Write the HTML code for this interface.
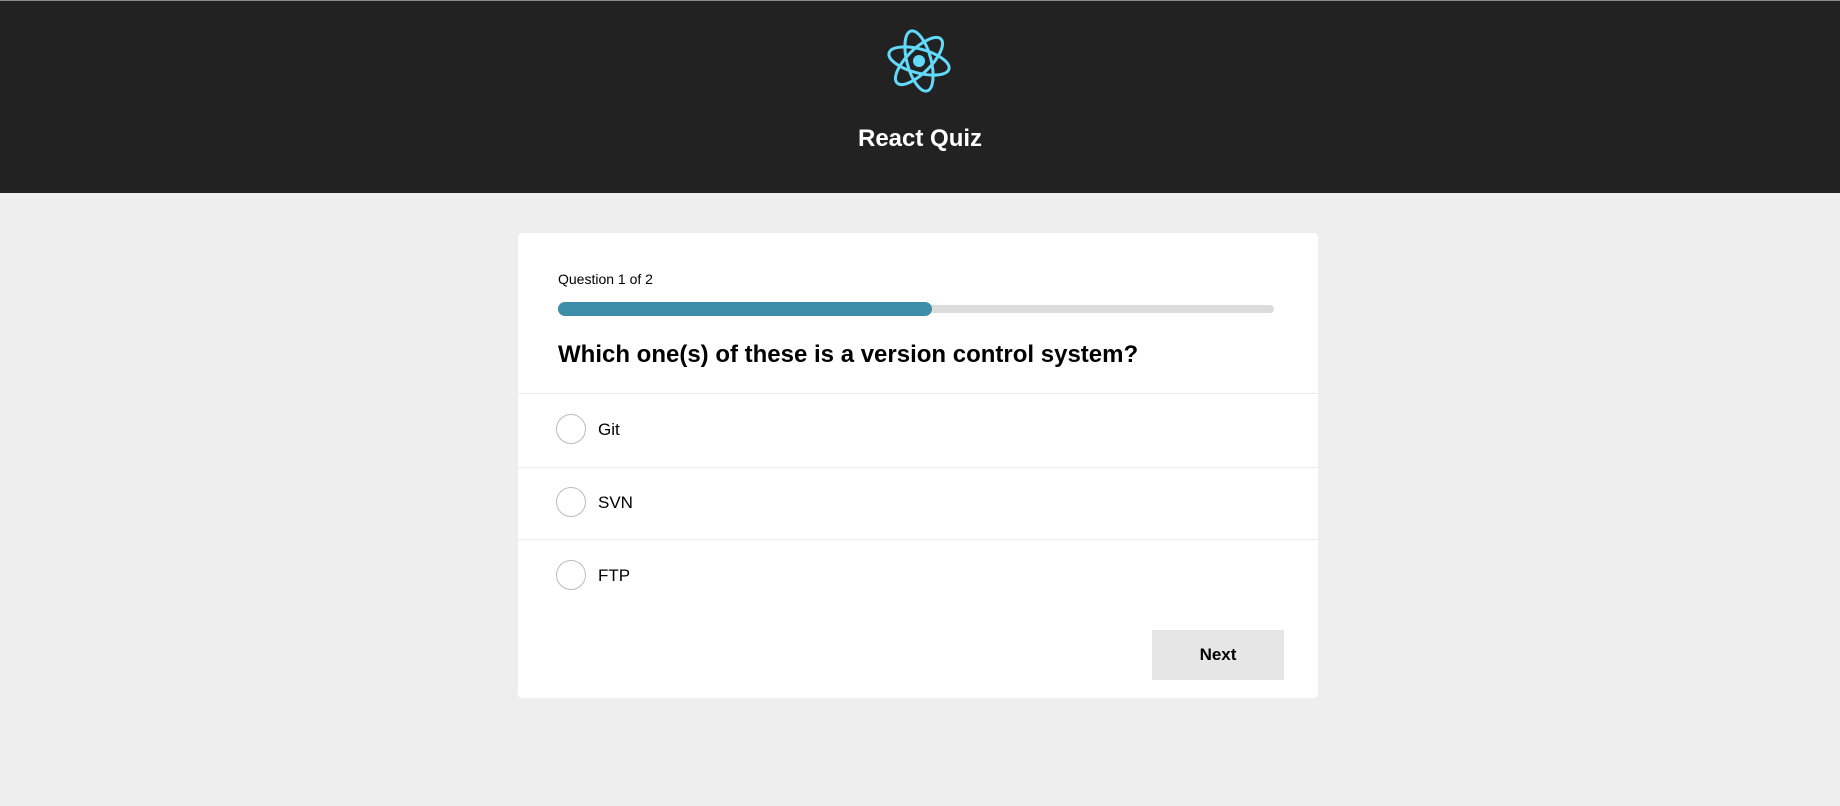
<!DOCTYPE html>
<html><head><meta charset="utf-8"><style>
*{margin:0;padding:0;box-sizing:border-box}
body{width:1840px;height:806px;background:#eeeeee;font-family:"Liberation Sans",Arial,sans-serif;position:relative;overflow:hidden}
.hdr{position:absolute;left:0;top:0;width:1840px;height:193px;background:#222;border-top:1px solid #8a8a8a}
.title{position:absolute;top:124px;width:100%;text-align:center;color:#fff;font-weight:bold;font-size:24px}
.card{position:absolute;left:518px;top:233px;width:800px;height:465px;background:#fff;border-radius:4px}
.qn{position:absolute;left:40px;top:38px;font-size:14px;color:#000}
.track{position:absolute;left:40px;top:72px;width:716px;height:8px;border-radius:4px;background:#dcdcdc}
.fill{position:absolute;left:40px;top:69px;width:374px;height:14px;border-radius:7px;background:#3d8da9}
.q{position:absolute;left:40px;top:108px;font-size:24px;font-weight:bold;color:#000}
.div{position:absolute;left:0;width:800px;height:1px;background:#ebebeb}
.opt{position:absolute;left:38px;width:30px;height:30px;border:1px solid #bbb;border-radius:50%}
.lab{position:absolute;left:80px;font-size:17px;color:#000}
.btn{position:absolute;left:634px;top:397px;width:132px;height:50px;background:#e6e6e6;font-weight:bold;font-size:17px;text-align:center;line-height:50px}
</style></head><body>
<div class="hdr">
<svg style="position:absolute;left:884px;top:25px" width="70" height="70" viewBox="-35 -35 70 70">
<g transform="translate(0,0) rotate(15)">
<g fill="none" stroke="#61dafb" stroke-width="3">
<ellipse rx="31" ry="12"/>
<ellipse rx="31" ry="12" transform="rotate(60)"/>
<ellipse rx="31" ry="12" transform="rotate(120)"/>
</g></g><circle r="6" fill="#61dafb"/></svg>
<div class="title">React Quiz</div>
</div>
<div class="card">
<div class="qn">Question 1 of 2</div>
<div class="track"></div><div class="fill"></div>
<div class="q">Which one(s) of these is a version control system?</div>
<div class="div" style="top:160px"></div>
<div class="opt" style="top:181px"></div><div class="lab" style="top:187px">Git</div>
<div class="div" style="top:234px"></div>
<div class="opt" style="top:254px"></div><div class="lab" style="top:260px">SVN</div>
<div class="div" style="top:306px"></div>
<div class="opt" style="top:327px"></div><div class="lab" style="top:333px">FTP</div>
<div class="btn">Next</div>
</div>
</body></html>
